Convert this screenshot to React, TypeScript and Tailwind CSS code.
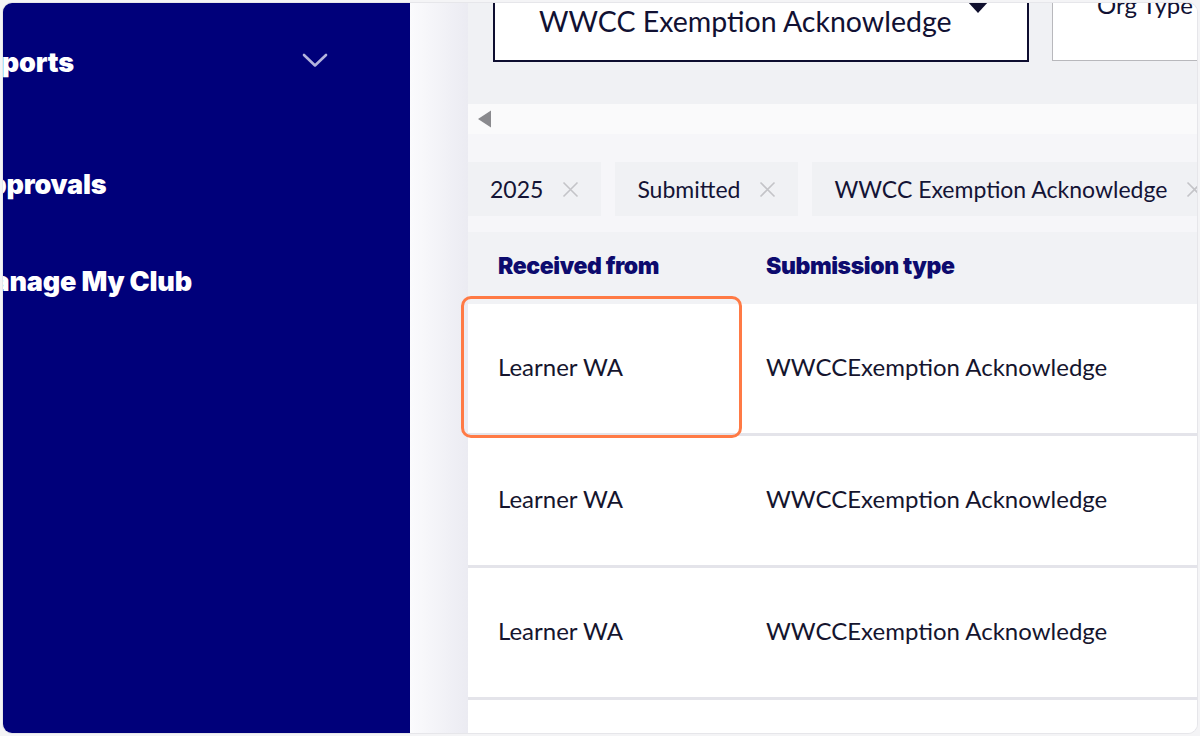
import React from 'react';

const navItems = [
  { label: 'Reports', h: 'h-[122px]', chevron: true },
  { label: 'Approvals', h: 'h-[97px]', chevron: false },
  { label: 'Manage My Club', h: 'h-[97px]', chevron: false },
];

const chips = ['2025', 'Submitted', 'WWCC Exemption Acknowledge'];

const rows = ['r1', 'r2', 'r3'];

const XIcon = () => (
  <svg width="17" height="17" viewBox="0 0 17 17" className="shrink-0">
    <path d="M1.5 1.5l14 14M15.5 1.5l-14 14" stroke="#c4c4c8" strokeWidth="1.6" fill="none" />
  </svg>
);

const Sidebar = () => (
  <aside className="w-[407px] shrink-0 bg-[#00007a] text-white">
    {navItems.map((item) => (
      <div key={item.label} className={`${item.h} pt-[44px] -ml-[35px] pr-[82px] flex items-start justify-between`}>
        <span className="text-[27px] leading-[32px] font-black tracking-[-0.2px] whitespace-nowrap" style={{ fontFamily: 'Inter, "Noto Sans", sans-serif' }}>
          {item.label}
        </span>
        {item.chevron && (
          <svg width="26" height="15" viewBox="0 0 26 15" className="mt-[6px]">
            <path d="M2 2l11 10.5L24 2" stroke="#b3b3dc" strokeWidth="2.6" fill="none" strokeLinecap="round" strokeLinejoin="round" />
          </svg>
        )}
      </div>
    ))}
  </aside>
);

export default function App() {
  return (
    <div className="w-[1200px] h-[736px] bg-[#f4f4f6] p-[2px]" style={{ fontFamily: 'Lato, "Open Sans", sans-serif' }}>
      <div className="w-full h-full rounded-[10px] overflow-hidden flex border border-[#e6e6ea]">
        <Sidebar />

        <main className="flex-1 flex min-w-0 bg-[#f6f6f9]">
          <div className="w-[58px] shrink-0 bg-gradient-to-r from-[#fbfbfd] to-[#ebebf2]" />

          <div className="flex-1 min-w-0 flex flex-col">
            {/* filters */}
            <div className="h-[101px] shrink-0 bg-[#f0f1f4] pl-[25px] flex items-start gap-[23px] overflow-hidden">
              <div className="w-[536px] h-[59px] shrink-0 bg-white border-2 border-t-0 border-[#0e0e30] relative">
                <span className="absolute left-[44px] top-[0px] text-[28.5px] leading-[36px] text-[#111133] whitespace-nowrap">
                  WWCC Exemption Acknowledge
                </span>
                <svg width="22" height="13" viewBox="0 0 22 13" className="absolute left-[472px] -top-[2px]">
                  <path d="M0 0h22L11 12z" fill="#10102e" />
                </svg>
              </div>
              <div className="w-[200px] h-[58px] shrink-0 bg-white border border-t-0 border-[#b8b8bc] relative">
                <span className="absolute left-[44px] -top-[13px] text-[24px] leading-[30px] text-[#111133] whitespace-nowrap">
                  Org Type
                </span>
              </div>
            </div>

            {/* horizontal scroller */}
            <div className="h-[30px] shrink-0 bg-[#fafafb] pl-[9px] flex items-center">
              <svg width="15" height="18" viewBox="0 0 15 18">
                <path d="M14 0.5v17L1 9z" fill="#8a8a8e" />
              </svg>
            </div>

            {/* chips */}
            <div className="mt-[28px] h-[54px] shrink-0 flex gap-[14px] overflow-hidden">
              {chips.map((c) => (
                <div key={c} className="h-full shrink-0 bg-[#f0f1f4] pl-[22px] pr-[22px] flex items-center gap-[19px]">
                  <span className="text-[23px] text-[#141436] whitespace-nowrap">{c}</span>
                  <XIcon />
                </div>
              ))}
            </div>

            {/* table */}
            <div className="mt-[16px] relative flex-1">
              <div className="h-[72px] bg-[#f1f2f5] pl-[30px] pb-[4px] flex items-center text-[23px] font-black tracking-[-0.4px] text-[#0d0b6e]" style={{ fontFamily: 'Inter, "Noto Sans", sans-serif' }}>
                <div className="w-[268px]">Received from</div>
                <div>Submission type</div>
              </div>
              {rows.map((r) => (
                <div key={r} className="h-[132px] bg-white border-b-[3px] border-[#e4e4ea] pl-[30px] pb-[3px] flex items-center text-[24px] text-[#15152e]">
                  <div className="w-[268px]">Learner WA</div>
                  <div>WWCCExemption Acknowledge</div>
                </div>
              ))}
              <div className="h-[60px] bg-white" />

              <div className="absolute -left-[7px] top-[64px] w-[281px] h-[142px] border-[3px] border-[#ff7a45] rounded-[10px]" />
            </div>
          </div>
        </main>
      </div>
    </div>
  );
}
